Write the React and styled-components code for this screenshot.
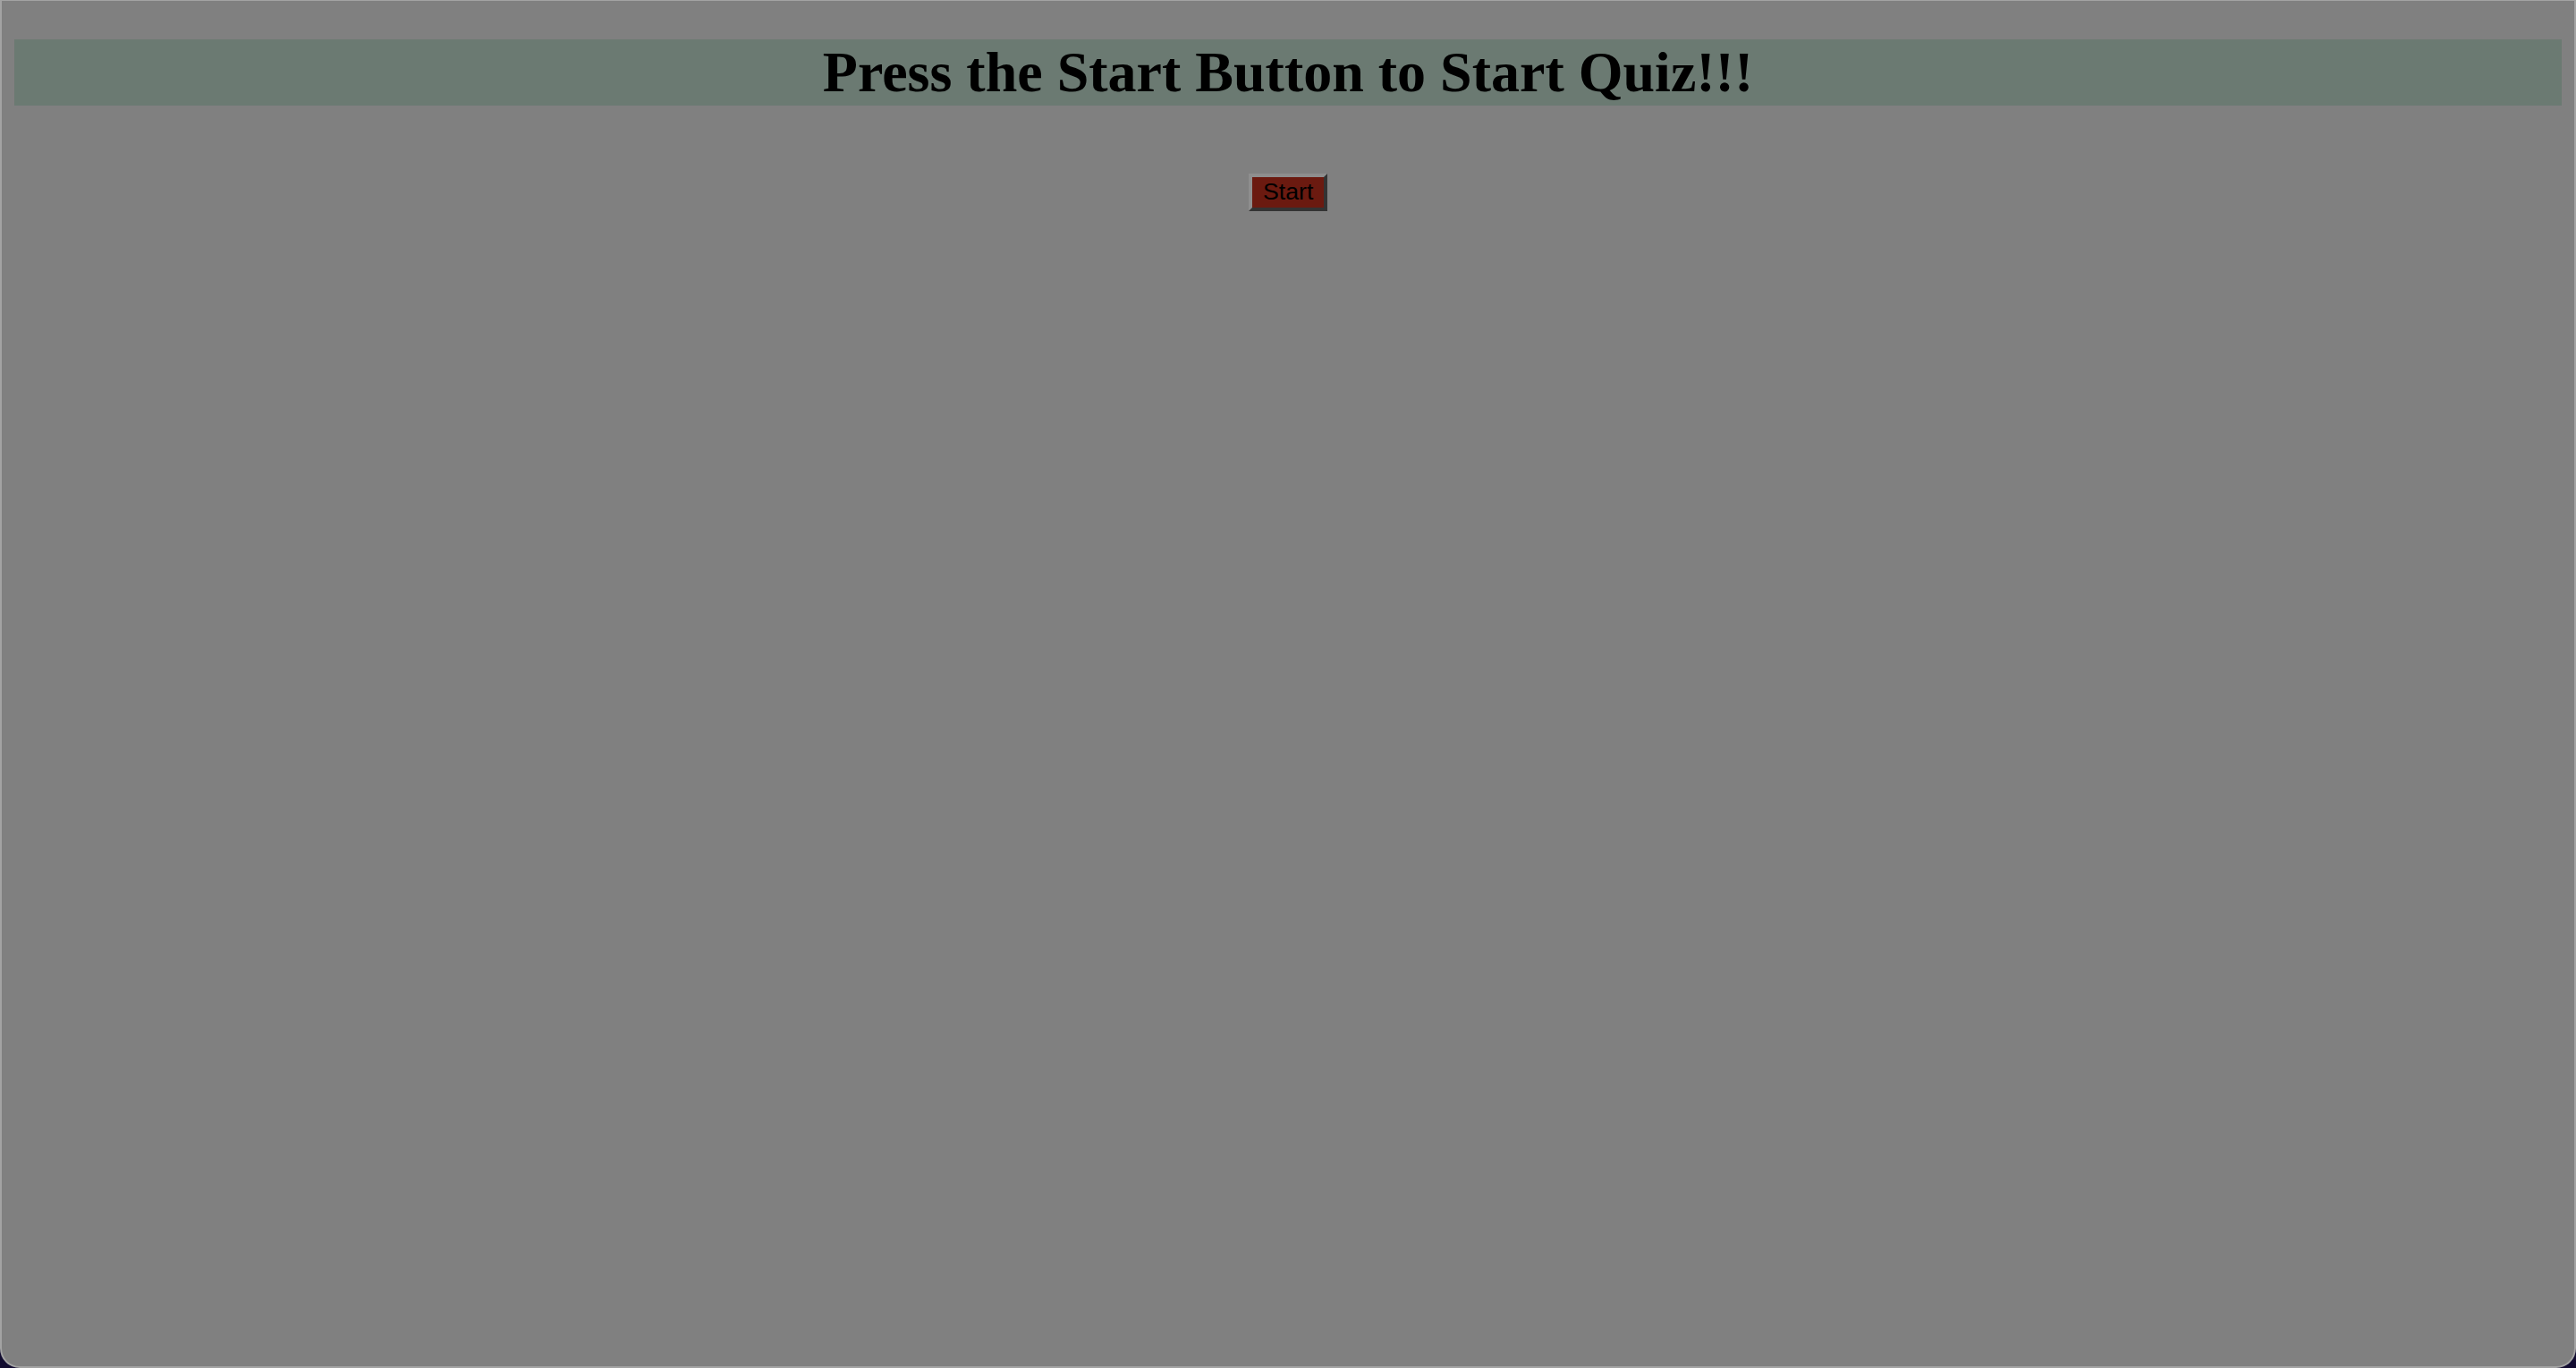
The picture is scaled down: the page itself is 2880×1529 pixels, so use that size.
import React from "react";
import styled, { createGlobalStyle } from "styled-components";

const Global = createGlobalStyle`
  html, body {
    margin: 0;
    padding: 0;
    background: #120c30;
  }
  #root {
    min-height: 1529px;
  }
`;

const Frame = styled.div`
  box-sizing: border-box;
  height: 1529px;
  background: #808080;
  border-style: solid;
  border-color: #a3a3a3;
  border-width: 1px 2px 2px 2px;
  border-radius: 0 0 22px 22px;
  padding: 0 14px;
  overflow: hidden;
`;

const Heading = styled.h1`
  margin: 43px 0 0;
  background: #6b7a72;
  color: #000;
  font-family: "Liberation Serif", "Times New Roman", serif;
  font-weight: bold;
  font-size: 64px;
  line-height: 74px;
  text-align: center;
`;

const StartButton = styled.button`
  display: block;
  margin: 76px auto 0;
  box-sizing: border-box;
  width: 88px;
  height: 42px;
  padding: 0 12px 3px;
  background: #6b1a10;
  color: #000;
  font-family: "Liberation Sans", Arial, sans-serif;
  font-size: 26.67px;
  line-height: 30px;
  border-style: solid;
  border-width: 4px;
  border-color: #8e8e8e #333333 #333333 #8e8e8e;
  cursor: pointer;
`;

export default function App() {
  return (
    <>
      <Global />
      <Frame>
        <Heading>Press the Start Button to Start Quiz!!!</Heading>
        <StartButton>Start</StartButton>
      </Frame>
    </>
  );
}
